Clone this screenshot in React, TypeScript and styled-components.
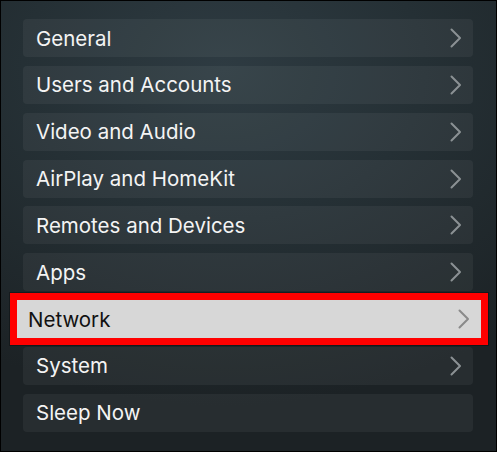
import React from "react";
import styled, { createGlobalStyle } from "styled-components";

const items = [
  "General",
  "Users and Accounts",
  "Video and Audio",
  "AirPlay and HomeKit",
  "Remotes and Devices",
  "Apps",
  "Network",
  "System",
  "Sleep Now",
];

const focused = "Network";
const noArrow = ["Sleep Now"];

function Chevron() {
  return (
    <Arrow viewBox="0 0 12 20" width="12" height="20">
      <path d="M1.5 1.5 L10 10 L1.5 18.5" fill="none" stroke="currentColor" strokeWidth="2" strokeLinecap="round" strokeLinejoin="round" />
    </Arrow>
  );
}

function App() {
  return (
    <>
      <GlobalStyle />
      <Screen>
        <List>
          {items.map((name) => (
            <Row key={name} $focused={name === focused}>
              <Label>{name}</Label>
              {!noArrow.includes(name) && <Chevron />}
            </Row>
          ))}
        </List>
      </Screen>
    </>
  );
}

export default App;

const GlobalStyle = createGlobalStyle`
  body {
    margin: 0;
    background: #000;
  }
`;

const Screen = styled.div`
  box-sizing: border-box;
  width: 497px;
  height: 452px;
  border: 1px solid #000;
  padding: 18px 23px 0 22px;
  background: radial-gradient(ellipse 90% 75% at 45% 15%, #2e3b42 0%, #253035 45%, #1c2225 100%);
  font-family: Inter, "Open Sans", sans-serif;
`;

const List = styled.div`
  display: flex;
  flex-direction: column;
  gap: 8.85px;
`;

const Row = styled.div<{ $focused: boolean }>`
  display: flex;
  align-items: center;
  justify-content: space-between;
  height: 38px;
  border-radius: ${(p) => (p.$focused ? "0" : "4px")};
  padding: ${(p) => (p.$focused ? "0 11px 0 11px" : "0 11px 0 13px")};
  margin: ${(p) => (p.$focused ? "0 -8px 0 -6px" : "0")};
  background: ${(p) => (p.$focused ? "#d7d7d7" : "rgba(255, 255, 255, 0.05)")};
  color: ${(p) => (p.$focused ? "#111" : "#f4f4f4")};
  outline: ${(p) => (p.$focused ? "7px solid #ff0000" : "none")};
  box-shadow: ${(p) => (p.$focused ? "0 0 0 8px rgba(0,0,0,0.3)" : "none")};
  position: relative;
  z-index: ${(p) => (p.$focused ? 1 : 0)};
  svg {
    color: ${(p) => (p.$focused ? "#8a8a8a" : "#8b9194")};
  }
`;

const Label = styled.span`
  font-size: 20.5px;
  font-weight: 400;
`;

const Arrow = styled.svg`
  display: block;
  flex: none;
`;
